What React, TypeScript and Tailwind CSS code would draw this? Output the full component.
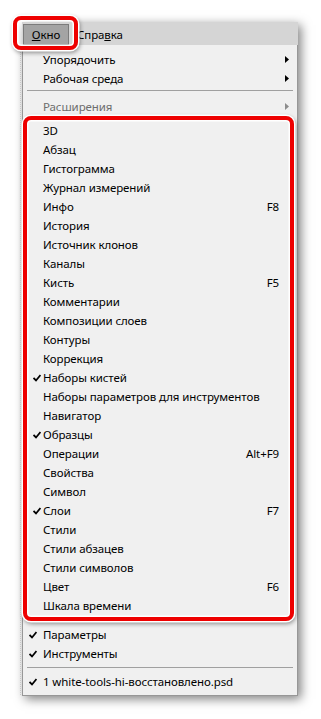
import React from 'react';

type Item = { label: string; key?: string; checked?: boolean };

const MAIN: Item[] = [
  { label: '3D' },
  { label: 'Абзац' },
  { label: 'Гистограмма' },
  { label: 'Журнал измерений' },
  { label: 'Инфо', key: 'F8' },
  { label: 'История' },
  { label: 'Источник клонов' },
  { label: 'Каналы' },
  { label: 'Кисть', key: 'F5' },
  { label: 'Комментарии' },
  { label: 'Композиции слоев' },
  { label: 'Контуры' },
  { label: 'Коррекция' },
  { label: 'Наборы кистей', checked: true },
  { label: 'Наборы параметров для инструментов' },
  { label: 'Навигатор' },
  { label: 'Образцы', checked: true },
  { label: 'Операции', key: 'Alt+F9' },
  { label: 'Свойства' },
  { label: 'Символ' },
  { label: 'Слои', key: 'F7', checked: true },
  { label: 'Стили' },
  { label: 'Стили абзацев' },
  { label: 'Стили символов' },
  { label: 'Цвет', key: 'F6' },
  { label: 'Шкала времени' },
];

const Check = () => (
  <svg width="8" height="8" viewBox="0 0 8 8" className="absolute left-[6px] top-[6px]">
    <path d="M0.5 4 L3 6.5 L7.5 1" fill="none" stroke="#000" strokeWidth="1.8" />
  </svg>
);

const Arrow = ({ muted }: { muted?: boolean }) => (
  <svg width="4" height="7" viewBox="0 0 4 7">
    <path d="M0 0 L4 3.5 L0 7 Z" fill={muted ? '#8c8c8c' : '#000'} />
  </svg>
);

function Row({ item, padLeft, padRight }: { item: Item; padLeft: string; padRight: string }) {
  return (
    <div className={`relative flex h-[19px] items-center justify-between ${padLeft} ${padRight}`}>
      {item.checked && <Check />}
      <span>{item.label}</span>
      {item.key && <span>{item.key}</span>}
    </div>
  );
}

export default function App() {
  return (
    <div
      className="relative h-[719px] w-[321px] overflow-hidden bg-white text-[11.5px] tracking-[-0.1px] text-black"
      style={{ fontFamily: '"Noto Sans", "Segoe UI", sans-serif' }}
    >
      <div className="absolute left-[20px] top-[45px] h-[650px] border-l border-dotted border-[#c8c8c8]" />

      <div className="ml-[22px] mt-[22px] w-[276px] shadow-[3px_3px_10px_rgba(0,0,0,0.5)]">
        {/* menu bar */}
        <div className="flex h-[23px] items-end bg-[#d5d5d5] pl-[1px]">
          <div className="flex h-[21px] w-[46px] items-center justify-center border border-[#7c7c7c] bg-[#a4a4a4]">
            <span>
              <span className="underline">О</span>кно
            </span>
          </div>
          <div className="flex h-[21px] items-center pl-[8px]">
            <span>
              Спра<span className="underline">в</span>ка
            </span>
          </div>
        </div>

        {/* dropdown */}
        <div className="border-x border-b border-[#979797] bg-[#f0f0f0] pb-[4px] pt-[5px]">
          <div className="flex h-[19px] items-center justify-between pl-[20px] pr-[8px]">
            <span>Упорядочить</span>
            <Arrow />
          </div>
          <div className="flex h-[19px] items-center justify-between pl-[20px] pr-[8px]">
            <span>Рабочая среда</span>
            <Arrow />
          </div>
          <div className="mx-[4px] mb-[6px] mt-[2px] h-px bg-[#a0a0a0]" />
          <div className="flex h-[19px] items-center justify-between pl-[20px] pr-[8px] text-[#6d6d6d]">
            <span>Расширения</span>
            <Arrow muted />
          </div>

          <div className="ml-0 mr-[3px] rounded-[8px] border-[4px] border-[#ee0000] pb-[2px] pt-px shadow-[0_0_0_1.5px_#fff,inset_0_0_0_1.5px_#fff,1px_2px_4px_1px_rgba(0,0,0,0.4)]">
            {MAIN.map((item) => (
              <Row key={item.label} item={item} padLeft="pl-[16px]" padRight="pr-[11px]" />
            ))}
          </div>

          <div className="mt-[4px]">
            <Row item={{ label: 'Параметры', checked: true }} padLeft="pl-[20px]" padRight="pr-[8px]" />
            <Row item={{ label: 'Инструменты', checked: true }} padLeft="pl-[20px]" padRight="pr-[8px]" />
          </div>
          <div className="mx-[4px] mb-[4px] mt-[4px] h-px bg-[#a0a0a0]" />
          <Row
            item={{ label: '1 white-tools-hi-восстановлено.psd', checked: true }}
            padLeft="pl-[20px]"
            padRight="pr-[8px]"
          />
        </div>
      </div>

      {/* highlight around the Окно menu title */}
      <div className="absolute left-[13px] top-[16px] h-[34px] w-[65px] rounded-[8px] border-[4px] border-[#ee0000] shadow-[0_0_0_1.5px_#fff,inset_0_0_0_1.5px_#fff,1px_2px_4px_1px_rgba(0,0,0,0.4)]" />
    </div>
  );
}
